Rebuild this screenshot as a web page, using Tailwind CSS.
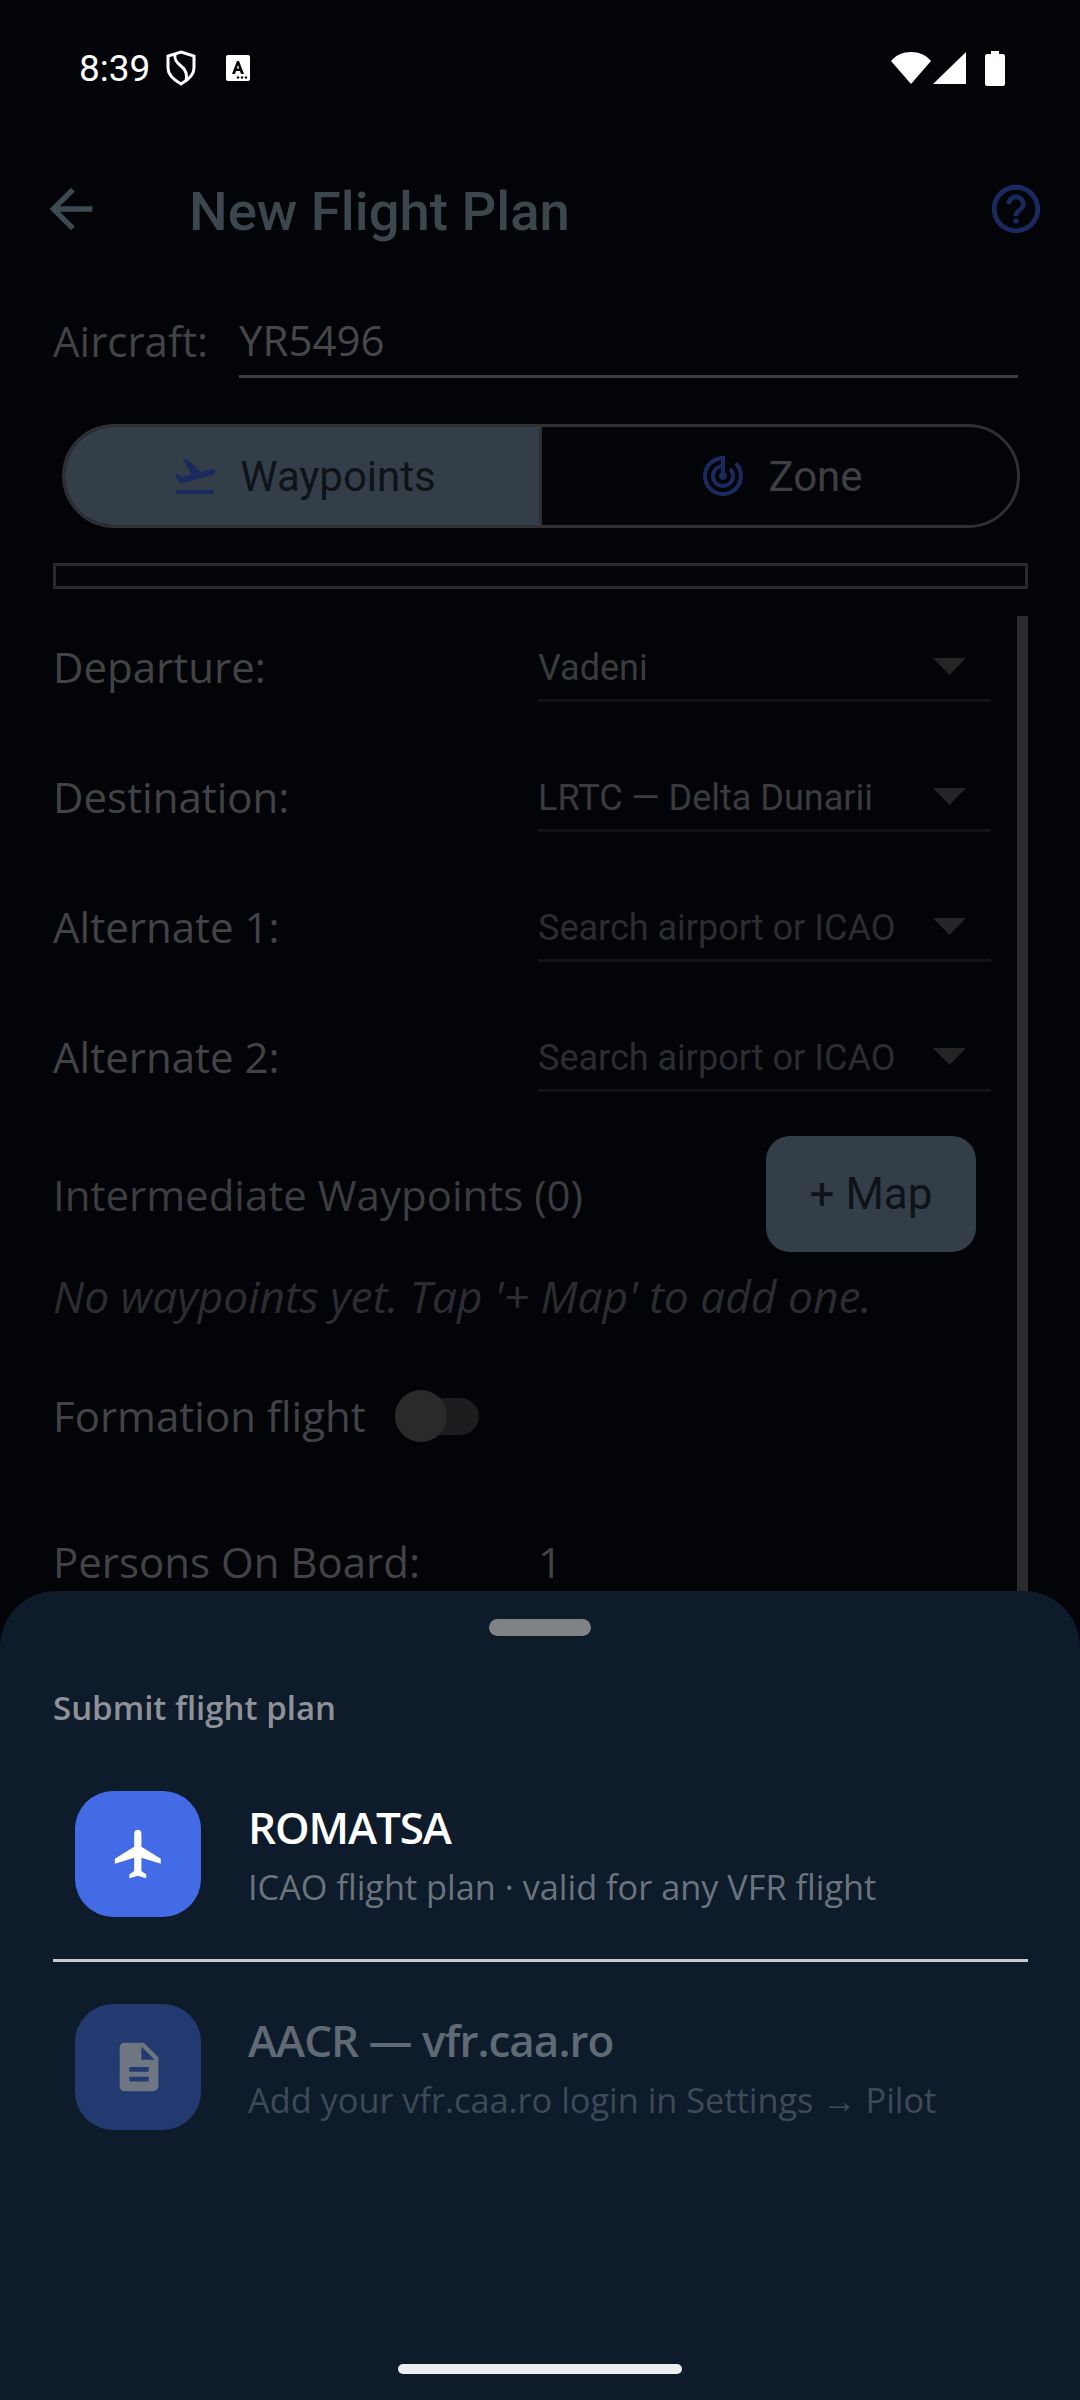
<!DOCTYPE html>
<html lang="en">
<head>
  <meta charset="UTF-8">
  <title>New Flight Plan</title>
  <script src="https://cdn.jsdelivr.net/npm/@tailwindcss/browser@4"></script>
</head>
<body class="bg-[#020408]">
  <div class="relative w-[1080px] h-[2400px] overflow-hidden bg-[#020408] font-['Open_Sans',sans-serif]">

    <!-- Status bar -->
    <div class="h-[136px] flex items-center pl-[79px] pr-[75px] text-white">
      <span class="font-['Roboto',sans-serif] text-[37px] leading-none w-[87px]">8:39</span>
      <svg class="w-[30px] h-[36px]" viewBox="0 0 30 36" fill="none" stroke="#fff" stroke-width="3"><path d="M15 2l13 4v12c0 7-6 12-13 16C8 30 2 25 2 18V6z"/><path d="M9 4c-1 6 2 9 6 12s7 7 5 15"/></svg>
      <svg class="w-[24px] h-[26px] ml-[30px]" viewBox="0 0 24 26"><rect width="24" height="26" rx="2" fill="#fff"/><path d="M6 19l5-13h2l5 13h-3l-1-3h-4l-1 3zM10.800 13.500h2.400L12 10z" fill="#020408"/><circle cx="12" cy="22.500" r="1.200" fill="#020408"/><circle cx="16" cy="22.500" r="1.200" fill="#020408"/><circle cx="20" cy="22.500" r="1.200" fill="#020408"/></svg>
      <div class="flex-1"></div>
      <svg class="w-[40px] h-[32px]" viewBox="0 0 40 32"><path d="M0 9C5 3 12 0 20 0s15 3 20 9L20 32z" fill="#fff"/></svg>
      <svg class="w-[33px] h-[32px] ml-[2px]" viewBox="0 0 33 32"><path d="M33 0v32H0z" fill="#fff"/></svg>
      <svg class="w-[20px] h-[35px] ml-[19px]" viewBox="0 0 20 35"><path d="M6 0h8v3h4c1 0 2 1 2 2v28c0 1-1 2-2 2H2c-1 0-2-1-2-2V5c0-1 1-2 2-2h4z" fill="#fff"/></svg>
    </div>

    <!-- Top bar -->
    <div class="h-[150px] flex items-center pl-[39px] pr-[35px] pb-[1px]">
      <svg class="w-[64px] h-[64px] -mt-[4px]" viewBox="0 0 24 24" fill="#3d4a52"><path d="M20 11H7.830l5.590-5.590L12 4l-8 8 8 8 1.410-1.410L7.830 13H20v-2z"/></svg>
      <h1 class="ml-[86px] mt-[3px] font-['Roboto',sans-serif] font-medium text-[54.500px] text-[#3c464d]">New Flight Plan</h1>
      <div class="flex-1"></div>
      <svg class="w-[58px] h-[58px] -mt-[4px]" viewBox="0 0 24 24" fill="#1b2a5e"><path d="M11 18h2v-2h-2v2zm1-16C6.480 2 2 6.480 2 12s4.480 10 10 10 10-4.480 10-10S17.520 2 12 2zm0 18c-4.410 0-8-3.590-8-8s3.590-8 8-8 8 3.590 8 8-3.590 8-8 8zm0-14c-2.210 0-4 1.790-4 4h2c0-1.100.9-2 2-2s2 .9 2 2c0 2-3 1.750-3 5h2c0-2.250 3-2.500 3-5 0-2.210-1.790-4-4-4z"/></svg>
    </div>

    <!-- Aircraft -->
    <div class="h-[92px] flex items-center pl-[53px]">
      <span class="text-[42px] text-[#424345] w-[186px] mt-[16px]">Aircraft:</span>
      <div class="w-[779px] h-[92px] flex items-center border-b-[3px] border-[#3b3c40] pb-[4px]">
        <span class="text-[42px] text-[#45474a] mt-[22px]">YR5496</span>
      </div>
    </div>

    <!-- Mode switch -->
    <div class="ml-[62px] mt-[46px] w-[958px] h-[104px] flex rounded-full border-[3px] border-[#302f33] overflow-hidden font-['Roboto',sans-serif] text-[42px]">
      <div class="w-[477px] pl-[3px] flex items-center justify-center gap-[21px] bg-[#343e48] border-r-[3px] border-[#302f33] text-[#0e1318]">
        <svg class="w-[48px] h-[48px]" viewBox="0 0 24 24" fill="#1b2a5e"><path d="M2.500 19h19v2h-19v-2zm19.570-9.360c-.21-.8-1.040-1.280-1.840-1.060L14.920 10l-6.900-6.430-1.930.51 4.140 7.170-4.970 1.330-1.970-1.540-1.450.39 2.590 4.490s7.120-1.900 16.570-4.430c.81-.23 1.280-1.050 1.070-1.850z"/></svg>
        <span>Waypoints</span>
      </div>
      <div class="flex-1 pl-[3px] flex items-center justify-center gap-[21px] text-[#3e3f41]">
        <svg class="w-[48px] h-[48px]" viewBox="0 0 24 24" fill="#1b2a5e"><path d="M19.070 4.930l-1.410 1.410C19.100 7.790 20 9.790 20 12c0 4.420-3.580 8-8 8s-8-3.580-8-8c0-4.080 3.050-7.440 7-7.930v2.020C8.160 6.570 6 9.030 6 12c0 3.310 2.690 6 6 6s6-2.690 6-6c0-1.660-.67-3.160-1.760-4.240l-1.410 1.410C15.550 9.900 16 10.900 16 12c0 2.210-1.790 4-4 4s-4-1.790-4-4c0-1.860 1.280-3.410 3-3.860v2.140c-.6.35-1 .98-1 1.720 0 1.100.9 2 2 2s2-.9 2-2c0-.74-.4-1.380-1-1.720V2h-1C6.480 2 2 6.480 2 12s4.480 10 10 10 10-4.480 10-10c0-2.760-1.120-5.260-2.930-7.070z"/></svg>
        <span>Zone</span>
      </div>
    </div>

    <!-- Empty message box -->
    <div class="ml-[53px] mt-[35px] w-[975px] h-[26px] border-[3px] border-[#2a2a2d]"></div>

    <!-- Form -->
    <div class="relative pl-[53px] pt-[15px]">
      <div class="absolute left-[1017px] top-[27px] w-[11px] h-[1000px] bg-[#2a2c30]"></div>

      <div class="h-[130px] flex items-center">
        <span class="w-[485px] -mt-[6px] text-[42px] text-[#424345]">Departure:</span>
        <div class="relative w-[453px] h-[66px] flex items-center border-b-[3px] border-[#111317] font-['Roboto',sans-serif] text-[36px] text-[#3a3b3d]">
          <span>Vadeni</span>
          <svg class="absolute left-[395px] top-[22px] w-[33px] h-[17px]" viewBox="0 0 33 17"><path d="M0 0h33L16.500 17z" fill="#252528"/></svg>
        </div>
      </div>
      <div class="h-[130px] flex items-center">
        <span class="w-[485px] -mt-[6px] text-[42px] text-[#424345]">Destination:</span>
        <div class="relative w-[453px] h-[66px] flex items-center border-b-[3px] border-[#111317] font-['Roboto',sans-serif] text-[36px] text-[#3a3b3d]">
          <span>LRTC — Delta Dunarii</span>
          <svg class="absolute left-[395px] top-[22px] w-[33px] h-[17px]" viewBox="0 0 33 17"><path d="M0 0h33L16.500 17z" fill="#252528"/></svg>
        </div>
      </div>
      <div class="h-[130px] flex items-center">
        <span class="w-[485px] -mt-[6px] text-[42px] text-[#424345]">Alternate 1:</span>
        <div class="relative w-[453px] h-[66px] flex items-center border-b-[3px] border-[#111317] font-['Roboto',sans-serif] text-[36px] text-[#2c2d30]">
          <span>Search airport or ICAO</span>
          <svg class="absolute left-[395px] top-[22px] w-[33px] h-[17px]" viewBox="0 0 33 17"><path d="M0 0h33L16.500 17z" fill="#252528"/></svg>
        </div>
      </div>
      <div class="h-[130px] flex items-center">
        <span class="w-[485px] -mt-[6px] text-[42px] text-[#424345]">Alternate 2:</span>
        <div class="relative w-[453px] h-[66px] flex items-center border-b-[3px] border-[#111317] font-['Roboto',sans-serif] text-[36px] text-[#2c2d30]">
          <span>Search airport or ICAO</span>
          <svg class="absolute left-[395px] top-[22px] w-[33px] h-[17px]" viewBox="0 0 33 17"><path d="M0 0h33L16.500 17z" fill="#252528"/></svg>
        </div>
      </div>

      <div class="mt-[12px] flex items-center justify-between w-[923px] h-[116px]">
        <span class="text-[42px] text-[#3c3d40]">Intermediate Waypoints (0)</span>
        <div class="w-[210px] h-[116px] flex items-center justify-center rounded-[24px] bg-[#343e48] font-['Roboto',sans-serif] text-[44px] text-[#0e1318]">+ Map</div>
      </div>
      <p class="mt-[16px] italic text-[44.300px] leading-[57px] text-[#2c2d30]">No waypoints yet. Tap '+ Map' to add one.</p>

      <div class="mt-[61px] h-[60px] flex items-center">
        <span class="-mt-[2px] text-[42px] text-[#424345]">Formation flight</span>
        <div class="relative ml-[29px] w-[84px] h-[37px] rounded-full bg-[#1d1d1f]">
          <div class="absolute left-0 top-[-8px] w-[52px] h-[52px] rounded-full bg-[#2b2a2a]"></div>
        </div>
      </div>

      <div class="mt-[84px] flex items-center">
        <span class="w-[485px] text-[42px] text-[#424345]">Persons On Board:</span>
        <span class="text-[42px] text-[#424345]">1</span>
      </div>
    </div>

    <!-- Bottom sheet -->
    <div class="absolute left-0 top-[1591px] w-[1080px] h-[809px] rounded-t-[56px] bg-[#0e1b2a]">
      <div class="mx-auto mt-[28px] w-[102px] h-[17px] rounded-full bg-[#808285]"></div>
      <p class="ml-[53px] mt-[47px] text-[33px] font-semibold leading-[50px] text-[#8e9298]">Submit flight plan</p>

      <div class="ml-[75px] mt-[58px] h-[126px] flex items-center">
        <div class="w-[126px] h-[126px] pl-[2px] flex items-center justify-center rounded-[38px] bg-[#426be5]">
          <svg class="w-[58px] h-[58px]" viewBox="0 0 24 24" fill="#fff"><path d="M21 16v-2l-8-5V3.500c0-.83-.67-1.500-1.500-1.500S10 2.670 10 3.500V9l-8 5v2l8-2.500V19l-2 1.500V22l3.500-1 3.500 1v-1.500L13 19v-5.500l8 2.500z"/></svg>
        </div>
        <div class="ml-[47px] mt-[6px]">
          <p class="text-[44px] font-semibold leading-[60px] tracking-[-1.100px] text-white">ROMATSA</p>
          <p class="text-[34.300px] leading-[60px] text-[#6b747c]">ICAO flight plan · valid for any VFR flight</p>
        </div>
      </div>

      <div class="ml-[53px] mt-[42px] w-[975px] h-[3px] bg-[#c8c9cb]"></div>

      <div class="ml-[75px] mt-[42px] h-[126px] flex items-center">
        <div class="w-[126px] h-[126px] pl-[2px] flex items-center justify-center rounded-[38px] bg-[#223a70]">
          <svg class="w-[58px] h-[58px]" viewBox="0 0 24 24" fill="#6e7781"><path d="M14 2H6c-1.100 0-1.990.9-1.990 2L4 20c0 1.100.89 2 1.990 2H18c1.100 0 2-.9 2-2V8l-6-6zm2 16H8v-2h8v2zm0-4H8v-2h8v2zm-3-5V3.500L18.500 9H13z"/></svg>
        </div>
        <div class="ml-[47px] mt-[6px]">
          <p class="text-[44px] font-semibold leading-[60px] tracking-[-1px] text-[#5f6a75]">AACR — vfr.caa.ro</p>
          <p class="text-[34.300px] leading-[60px] text-[#3e4a56]">Add your vfr.caa.ro login in Settings → Pilot</p>
        </div>
      </div>

      <div class="absolute left-[398px] top-[773px] w-[284px] h-[10px] rounded-full bg-[#eceef0]"></div>
    </div>
  </div>
</body>
</html>
